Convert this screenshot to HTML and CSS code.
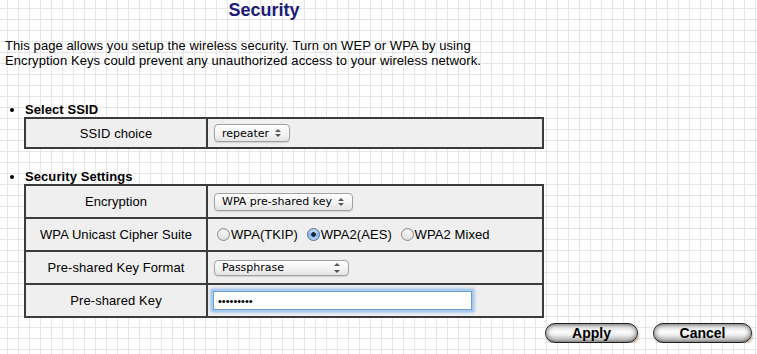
FILE: index.html
```html
<!DOCTYPE html>
<html lang="en">
<head>
    <meta charset="UTF-8">
    <meta name="viewport" content="width=device-width, initial-scale=1.0">
    <title>Security</title>
    <link rel="stylesheet" href="styles.css">
</head>
<body>
    <h1 class="title">Security</h1>
    <p class="intro">This page allows you setup the wireless security. Turn on WEP or WPA by using<br>Encryption Keys could prevent any unauthorized access to your wireless network.</p>

    <form id="securityForm">
        <ul class="sections">
            <li>
                <b>Select SSID</b>
                <table class="settings first">
                    <tr>
                        <td class="label">SSID choice</td>
                        <td class="value">
                            <span class="sel"><select class="ssid"><option>repeater</option></select></span>
                        </td>
                    </tr>
                </table>
            </li>
            <li class="next">
                <b>Security Settings</b>
                <table class="settings">
                    <tr>
                        <td class="label">Encryption</td>
                        <td class="value">
                            <span class="sel"><select class="encrypt"><option>WPA pre-shared key</option></select></span>
                        </td>
                    </tr>
                    <tr>
                        <td class="label">WPA Unicast Cipher Suite</td>
                        <td class="value">
                            <span class="radios">
                                <label><input type="radio" name="cipher">WPA(TKIP)</label>
                                <label><input type="radio" name="cipher" checked>WPA2(AES)</label>
                                <label><input type="radio" name="cipher">WPA2 Mixed</label>
                            </span>
                        </td>
                    </tr>
                    <tr>
                        <td class="label">Pre-shared Key Format</td>
                        <td class="value">
                            <span class="sel small"><select class="format"><option>Passphrase</option></select></span>
                        </td>
                    </tr>
                    <tr>
                        <td class="label">Pre-shared Key</td>
                        <td class="value">
                            <input type="password" class="key" value="123456789">
                        </td>
                    </tr>
                </table>
            </li>
        </ul>

        <div class="actions">
            <button type="button" class="pill apply">Apply</button>
            <button type="button" class="pill cancel">Cancel</button>
        </div>
    </form>
</body>
</html>
```

FILE: styles.css
```css
body {
    margin: 0;
    padding: 0 5px;
    font-family: "Liberation Sans", Arial, sans-serif;
    font-size: 13px;
    line-height: 15px;
    letter-spacing: 0.08px;
    color: #000;
    background-color: #fff;
    /* graph paper background */
    background-image: linear-gradient(to right, #e6e6e6 1px, transparent 1px),
                      linear-gradient(to bottom, #e6e6e6 1px, transparent 1px);
    background-size: 11px 11px;
    background-position: 7px 8px;
}
.title {
    margin: 0;
    width: 518px;
    text-align: center;
    font-size: 18px;
    line-height: 20px;
    letter-spacing: 0;
    color: #1c1c7c;
}
.intro {
    margin: 18px 0 0;
    white-space: nowrap;
}
.sections {
    margin: 34px 0 0;
    padding-left: 20px;
    list-style: disc;
}
.sections .next {
    margin-top: 20px;
}
.settings {
    width: 520px;
    margin-left: -1px;
    border: 1px solid #3b3b3b;
    border-spacing: 0;
    background: #efefef;
}
.settings td {
    border: 1px solid #3b3b3b;
    height: 33px;
    padding: 0 6px;
    box-sizing: border-box;
}
.settings.first td {
    height: 30px;
}
.settings .label {
    width: 182px;
    text-align: center;
}
.sel {
    position: relative;
    display: inline-block;
    vertical-align: middle;
}
.sel select {
    -webkit-appearance: none;
    appearance: none;
    display: block;
    height: 18px;
    margin: 0;
    padding: 0 0 0 7px;
    border: 1px solid #a2a2a2;
    border-radius: 4px;
    font: 11px "DejaVu Sans", sans-serif;
    letter-spacing: 0;
    color: #000;
    background: linear-gradient(#ffffff, #f3f3f3 55%, #e4e4e4);
    box-shadow: 0 1px 1px rgba(0, 0, 0, .12);
}
/* the little up/down arrows */
.sel::before,
.sel::after {
    content: "";
    position: absolute;
    right: 9px;
    border-left: 3px solid transparent;
    border-right: 3px solid transparent;
}
.sel::before {
    top: 5px;
    border-bottom: 3px solid #555;
}
.sel::after {
    bottom: 5px;
    border-top: 3px solid #555;
}
.sel.small::before { top: 3px; }
.sel.small::after { bottom: 3px; }
.ssid { width: 76px; }
.encrypt { width: 139px; }
.sel .format { width: 135px; height: 16px; }
.radios {
    margin-left: -2px;
}
.radios input {
    -webkit-appearance: none;
    appearance: none;
    width: 13px;
    height: 13px;
    margin: 0 1px 0 5px;
    border: 1px solid #8c8c8c;
    border-radius: 50%;
    vertical-align: -2px;
    background: linear-gradient(#fdfdfd, #dedede);
    box-shadow: inset 0 1px 1px rgba(0, 0, 0, .12);
}
.radios input:checked {
    border-color: #4f6f99;
    background: radial-gradient(circle, #1a2536 0 2px, transparent 2.6px),
                linear-gradient(#d3e6fa, #86b9ee 55%, #b4d6f7);
}
.key {
    display: block;
    width: 259px;
    height: 19px;
    margin-left: -1px;
    box-sizing: border-box;
    padding: 0 4px;
    border: 1px solid #6c9ed6;
    outline: none;
    font: 11px "Liberation Sans", sans-serif;
    background: #fff;
    box-shadow: 0 0 0 2px #a9cbef, 0 0 3px 2px #7eb0e6;
}
.actions {
    display: flex;
    justify-content: flex-end;
    gap: 15px;
    margin-top: 5px;
}
.pill {
    height: 20px;
    padding: 0;
    border: 1px solid #1e1e1e;
    border-radius: 10px;
    font: bold 14px "Liberation Sans", Arial, sans-serif;
    color: #000;
    background: linear-gradient(#9c9c9c, #e4e4e4 22%, #fdfdfd 42%, #f0f0f0 60%, #bdbdbd 85%, #8c8c8c);
    box-shadow: inset 5px 0 4px -3px rgba(0, 0, 0, .35),
                inset -5px 0 4px -3px rgba(0, 0, 0, .35),
                1px 2px 2px rgba(140, 110, 60, .45);
}
.apply { width: 93px; }
.cancel { width: 99px; }
```
